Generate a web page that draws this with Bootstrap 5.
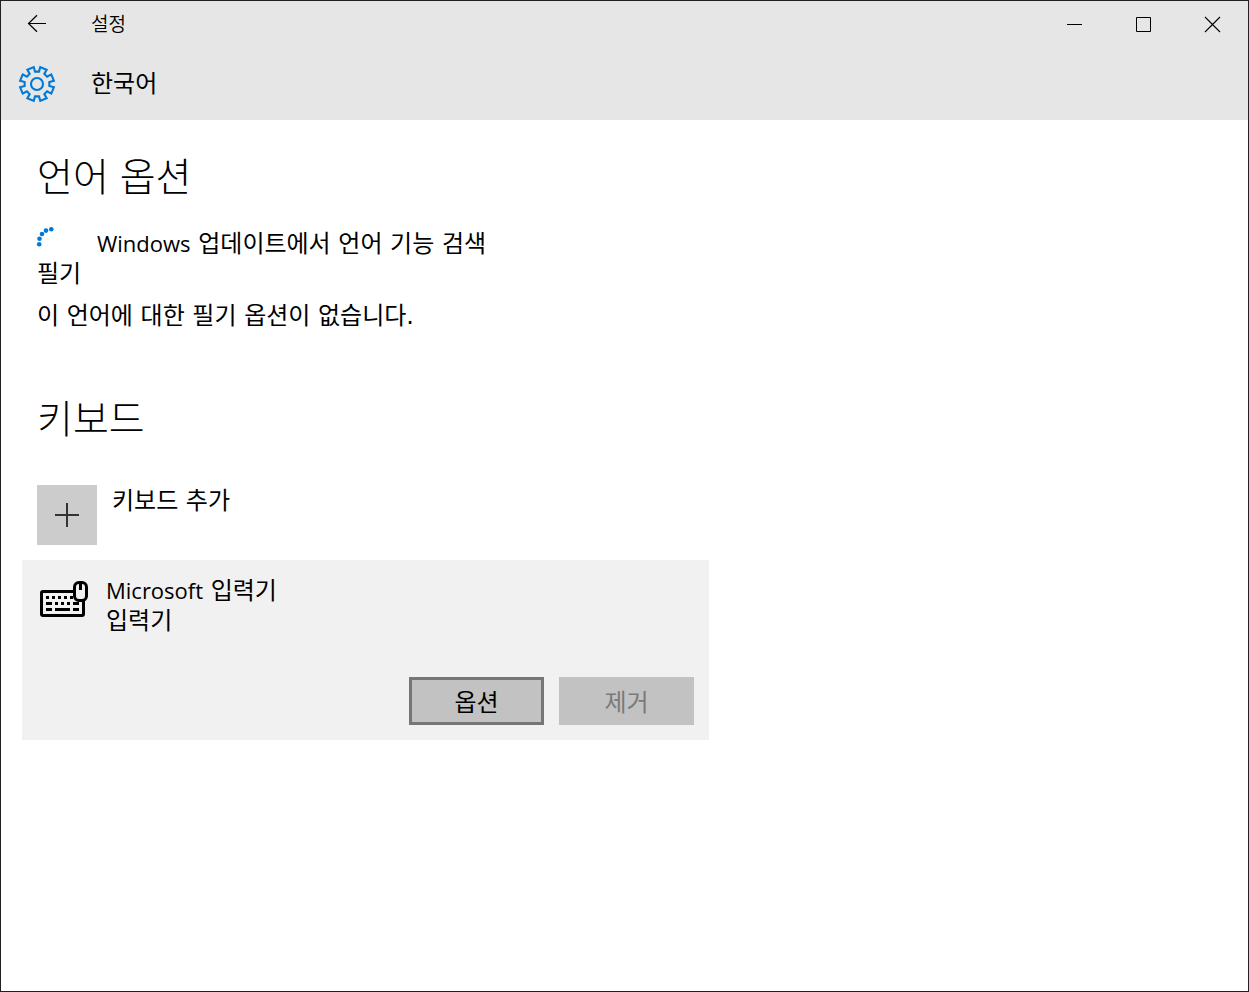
<!DOCTYPE html>
<html lang="ko">
<head>
<meta charset="utf-8">
<meta name="viewport" content="width=device-width, initial-scale=1">
<title>설정</title>
<link rel="stylesheet" href="https://cdn.jsdelivr.net/npm/bootstrap@5.3.0/dist/css/bootstrap.min.css">
<style>
  body { font-family: "DejaVu Sans", "Noto Sans CJK KR", sans-serif; font-size: 24px; line-height: 30px; font-weight: 400; color: #000; background: #fff; }
  svg { display: block; overflow: visible; }
  .app-window { border: 1px solid #231f20; }
  .app-header { background: #e6e6e6; }
  .title-bar { height: 46px; padding-right: 1px; }
  .title-text { font-size: 19px; line-height: 24px; font-weight: 350; }
  .icon-slot { width: 72px; margin-right: 18px; }
  .win-btn { width: 69px; height: 46px; color: #000; }
  .page-bar { height: 73px; }
  .page-name { font-size: 24px; line-height: 32px; font-weight: 400; }
  .content-area { padding: 30px 36px; max-width: 729px; }
  .section-title { font-size: 39px; line-height: 48px; font-weight: 300; font-family: "Noto Sans CJK KR", sans-serif; }
  .latin { font-family: "Open Sans", sans-serif; font-size: 22px; line-height: 24px; }
  .search-status { margin-top: 31px; }
  .dots { width: 60px; }
  .keyboards { margin-top: 61px; }
  .add-btn { gap: 15px; margin-top: 45px; color: #000; font-size: 24px; line-height: 32px; }
  .add-tile { width: 60px; height: 60px; background: #ccc; }
  .device { background: #f1f1f1; padding: 15px; margin: 15px -15px 0; }
  .device-info { gap: 18px; padding: 1px 0 0 3px; }
  .device-icon { margin-top: 5px; }
  .cmd-btn { width: 135px; height: 48px; font-size: 24px; line-height: 30px; color: #000; background: #c2c2c2; border: 3px solid #c2c2c2; }
  .cmd-btn.is-focused { border-color: #767676; }
  .cmd-btn:disabled { color: #7a7a7a; background: #c2c2c2; border-color: #c2c2c2; opacity: 1; }
  .cmd-row { gap: 15px; margin-top: 41px; }
</style>
</head>
<body>
<div class="app-window min-vh-100 d-flex flex-column">
  <header class="app-header">
    <div class="title-bar d-flex align-items-center">
      <button type="button" class="icon-slot btn p-0 border-0 rounded-0 d-flex justify-content-center" aria-label="뒤로">
        <svg width="18" height="18" viewBox="0 0 18 18" fill="none" stroke="#000" stroke-width="1.200"><path d="M18 8.500H.5M9 .2.5 8.500 9 16.800"/></svg>
      </button>
      <span class="title-text me-auto">설정</span>
      <button type="button" class="win-btn btn p-0 border-0 rounded-0 d-flex align-items-center justify-content-center" aria-label="최소화">
        <svg width="15" height="15" viewBox="0 0 15 15"><path d="M0 7h15v1H0z"/></svg>
      </button>
      <button type="button" class="win-btn btn p-0 border-0 rounded-0 d-flex align-items-center justify-content-center" aria-label="최대화">
        <svg width="15" height="15" viewBox="0 0 15 15" fill="none" stroke="#000"><path d="M.5.5h14v14H.5z"/></svg>
      </button>
      <button type="button" class="win-btn btn p-0 border-0 rounded-0 d-flex align-items-center justify-content-center" aria-label="닫기">
        <svg width="15" height="15" viewBox="0 0 15 15" fill="none" stroke="#000" stroke-width="1.1"><path d="M0 0l15 15M15 0 0 15"/></svg>
      </button>
    </div>
    <div class="page-bar d-flex align-items-center">
      <span class="icon-slot d-flex justify-content-center">
        <svg width="36" height="36" viewBox="-18 -18 36 36" fill="none" stroke="#0078d7" stroke-width="2.100">
          <path d="M1.960-12.350 3.280-16.880 9.620-14.260 7.350-10.110 10.110-7.350 14.260-9.620 16.880-3.280 12.350-1.960 12.350 1.960 16.880 3.280 14.260 9.620 10.110 7.350 7.350 10.110 9.620 14.260 3.280 16.880 1.960 12.350-1.960 12.350-3.280 16.880-9.620 14.260-7.350 10.110-10.110 7.350-14.260 9.620-16.880 3.280-12.350 1.960-12.350-1.960-16.880-3.280-14.260-9.620-10.110-7.350-7.350-10.110-9.620-14.260-3.280-16.880-1.960-12.350z"/>
          <circle r="6"/>
        </svg>
      </span>
      <h1 class="page-name mb-0">한국어</h1>
    </div>
  </header>

  <main class="content-area">
    <section>
      <h2 class="section-title mb-0">언어 옵션</h2>
      <div class="search-status d-flex" role="status">
        <span class="dots flex-shrink-0">
          <svg width="18" height="24" viewBox="0 0 18 24" fill="#0078d7"><circle cx="2.200" cy="15.200" r="2.300"/><circle cx="2.500" cy="9.700" r="2.300"/><circle cx="5" cy="5" r="2.300"/><circle cx="9" cy="1.600" r="2.300"/><circle cx="14.300" cy="0.200" r="2.300"/></svg>
        </span>
        <span><span class="latin">Windows</span> 업데이트에서 언어 기능 검색</span>
      </div>
      <p class="mb-0">필기</p>
      <p class="mt-2 pt-1 mb-0">이 언어에 대한 필기 옵션이 없습니다.</p>
    </section>

    <section class="keyboards">
      <h2 class="section-title mb-0">키보드</h2>
      <button type="button" class="add-btn btn p-0 border-0 rounded-0 d-flex align-items-start text-start">
        <span class="add-tile d-flex align-items-center justify-content-center">
          <svg width="24" height="24" viewBox="0 0 24 24" fill="#333"><path d="M11 0h2v24h-2zM0 11h24v2H0z"/></svg>
        </span>
        <span>키보드 추가</span>
      </button>
      <div class="device">
        <div class="device-info d-flex align-items-start">
          <svg class="device-icon flex-shrink-0" width="48" height="36" viewBox="0 0 48 36">
            <rect x="1.500" y="10.500" width="42" height="24" rx="1.500" fill="none" stroke="#000" stroke-width="3"/>
            <path d="M6 15h3v3H6zM12 15h3v3h-3zM18 15h3v3h-3zM24 15h3v3h-3zM30 15h3v3h-3zM6 21h6v3H6zM15 21h3v3h-3zM21 21h3v3h-3zM27 21h3v3h-3zM33 21h6v3h-6zM6 27h6v3H6zM15 27h15v3H15zM33 27h6v3h-6z"/>
            <rect x="34.500" y="1.500" width="12" height="18" rx="4.500" fill="#f1f1f1" stroke="#000" stroke-width="3"/>
            <path d="M39 2h3v7h-3z"/>
          </svg>
          <div>
            <div><span class="latin">Microsoft</span> 입력기</div>
            <div>입력기</div>
          </div>
        </div>
        <div class="cmd-row d-flex justify-content-end">
          <button type="button" class="cmd-btn is-focused btn rounded-0 p-0 pt-1">옵션</button>
          <button type="button" class="cmd-btn btn rounded-0 p-0 pt-1" disabled>제거</button>
        </div>
      </div>
    </section>
  </main>
</div>
<script src="https://cdn.jsdelivr.net/npm/bootstrap@5.3.0/dist/js/bootstrap.bundle.min.js"></script>
</body>
</html>
